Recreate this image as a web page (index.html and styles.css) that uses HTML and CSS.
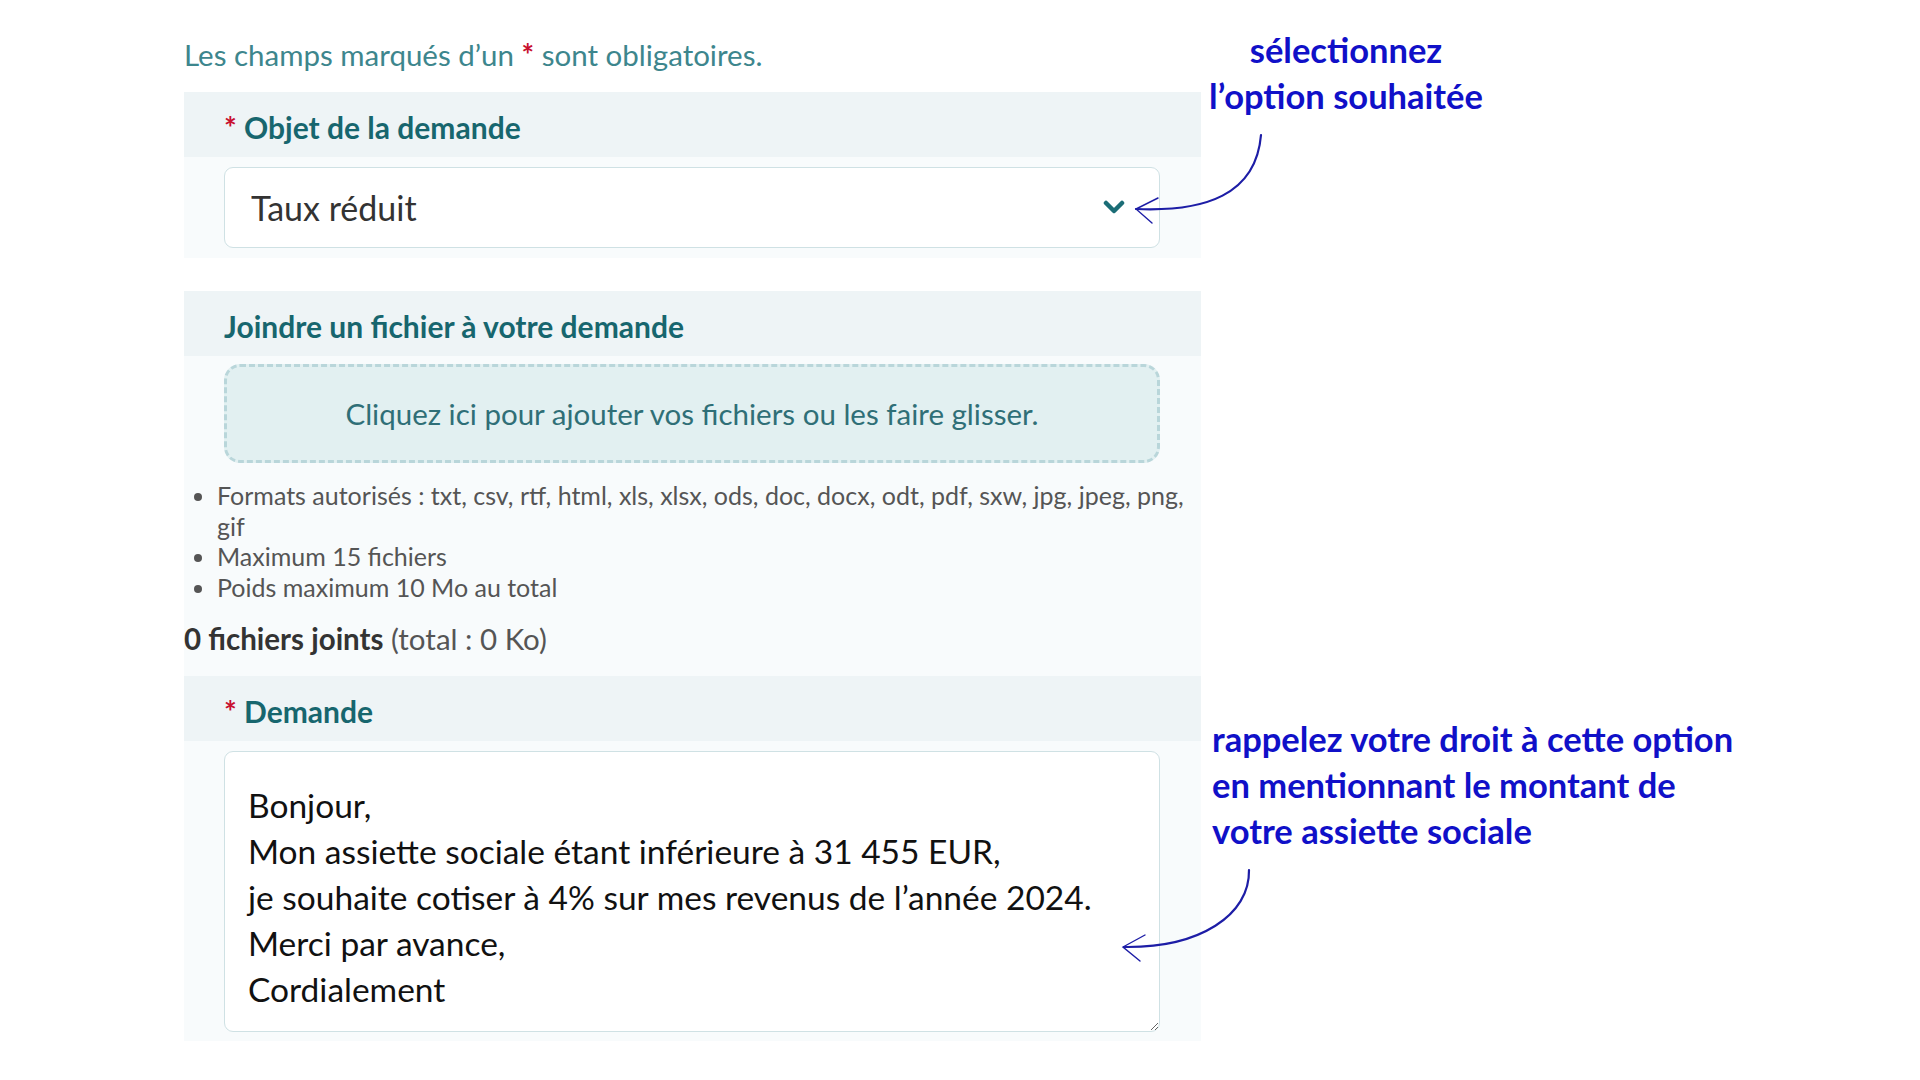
FILE: index.html
```html
<!DOCTYPE html>
<html lang="fr">
<head>
    <meta charset="UTF-8">
    <meta name="viewport" content="width=device-width, initial-scale=1.0">
    <title>Objet de la demande</title>
    <link rel="stylesheet" href="styles.css">
</head>
<body>
    <div class="page">
        <form class="demande">
            <p class="intro">Les champs marqués d’un <span class="req">*</span> sont obligatoires.</p>

            <section class="field">
                <div class="field-head">
                    <label for="objet"><span class="req">*</span> Objet de la demande</label>
                </div>
                <div class="field-body">
                    <div class="select-wrap">
                        <select id="objet" class="select">
                            <option>Taux réduit</option>
                        </select>
                        <svg class="chevron" width="22" height="15" viewBox="0 0 22 15">
                            <path d="M3 3 L11 11 L19 3" fill="none" stroke="#1b6d76" stroke-width="4.5" stroke-linecap="round" stroke-linejoin="round"/>
                        </svg>
                    </div>
                </div>
            </section>

            <section class="field field-files">
                <div class="field-head">
                    <label>Joindre un fichier à votre demande</label>
                </div>
                <div class="field-body">
                    <div class="dropzone">Cliquez ici pour ajouter vos fichiers ou les faire glisser.</div>
                </div>
                <ul class="rules">
                    <li>Formats autorisés : txt, csv, rtf, html, xls, xlsx, ods, doc, docx, odt, pdf, sxw, jpg, jpeg, png, gif</li>
                    <li>Maximum 15 fichiers</li>
                    <li>Poids maximum 10 Mo au total</li>
                </ul>
                <p class="counter"><strong>0 fichiers joints</strong> (total : 0 Ko)</p>
            </section>

            <section class="field">
                <div class="field-head">
                    <label for="texte"><span class="req">*</span> Demande</label>
                </div>
                <div class="field-body">
                    <textarea id="texte" class="message">Bonjour,
Mon assiette sociale étant inférieure à 31 455 EUR,
je souhaite cotiser à 4% sur mes revenus de l’année 2024.
Merci par avance,
Cordialement</textarea>
                </div>
            </section>
        </form>

        <!-- annotations -->
        <div class="note note-select">sélectionnez<br>l’option souhaitée</div>
        <div class="note note-demande">rappelez votre droit à cette option<br>en mentionnant le montant de<br>votre assiette sociale</div>

        <svg class="arrows" width="1920" height="1080" viewBox="0 0 1920 1080">
            <g fill="none" stroke="#1d1da6" stroke-linecap="round">
                <path d="M1261 135 C1256 195 1205 212 1136 209" stroke-width="2.2"/>
                <path d="M1158 198 L1136 209 L1152 223" stroke-width="1.4"/>
                <path d="M1249 870 C1250 915 1200 948 1124 947" stroke-width="2.2"/>
                <path d="M1145 935 L1123 947 L1140 961" stroke-width="1.4"/>
            </g>
        </svg>
    </div>
</body>
</html>
```

FILE: styles.css
```css
:root {
    --teal: #17666e;
    --teal-light: #3d868d;
    --red: #c8102e;
    --head-bg: #eef4f6;
    --body-bg: #f8fbfc;
    --border: #cfe1e4;
    --note-blue: #1010c8;
}

* {
    margin: 0;
    padding: 0;
    box-sizing: border-box;
}

body {
    font-family: Lato, "Noto Sans", sans-serif;
    background: #ffffff;
    color: #333333;
}

.page {
    position: relative;
    width: 1920px;
    height: 1080px;
    overflow: hidden;
}

.demande {
    width: 1017px;
    margin-left: 184px;
    padding-top: 37px;
}

.intro {
    font-size: 29.5px;
    line-height: 36px;
    color: var(--teal-light);
    margin-bottom: 19px;
}

.req {
    color: var(--red);
    font-weight: bold;
}

.field {
    background: var(--body-bg);
    margin-bottom: 33px;
}

.field-files {
    margin-bottom: 0;
    padding-bottom: 19px;
}

.field-head {
    background: var(--head-bg);
    height: 65px;
    padding: 17px 40px 0;
}

.field-head label {
    font-size: 30px;
    line-height: 36px;
    font-weight: bold;
    color: var(--teal);
}

.field-body {
    padding: 10px 41px 10px 40px;
}

.select-wrap {
    position: relative;
}

.select {
    appearance: none;
    width: 100%;
    height: 81px;
    padding: 0 60px 0 26px;
    font-family: Lato, "Noto Sans", sans-serif;
    font-size: 34px;
    color: #333333;
    background: #ffffff;
    border: 1px solid var(--border);
    border-radius: 9px;
}

.chevron {
    position: absolute;
    right: 35px;
    top: 33px;
}

.field-files .field-body {
    padding-top: 8px;
    padding-bottom: 0;
}

.dropzone {
    height: 99px;
    display: flex;
    align-items: center;
    justify-content: center;
    background: #e2f0f1;
    border: 3px dashed #b9d6da;
    border-radius: 16px;
    font-size: 29.5px;
    color: #2f6f77;
}

.rules {
    margin-top: 17px;
    padding-left: 33px;
    font-size: 25px;
    line-height: 30.5px;
    color: #555555;
}

.counter {
    margin-top: 19px;
    font-size: 29.5px;
    line-height: 36px;
    color: #555555;
}

.counter strong {
    color: #333333;
}

.message {
    display: block;
    width: 100%;
    height: 281px;
    padding: 29.5px 23px 10px;
    font-family: Lato, "Noto Sans", sans-serif;
    font-size: 33.5px;
    line-height: 46px;
    color: #111111;
    background: #ffffff;
    border: 1px solid var(--border);
    border-radius: 9px;
}

.field:last-child {
    padding-bottom: 9px;
}

.field:last-child .field-body {
    padding-bottom: 0;
}

/* annotations */
.note {
    position: absolute;
    font-size: 34.5px;
    line-height: 46px;
    font-weight: bold;
    color: var(--note-blue);
}

.note-select {
    left: 1170px;
    top: 27px;
    width: 352px;
    text-align: center;
}

.note-demande {
    left: 1212px;
    top: 716px;
}

.arrows {
    position: absolute;
    left: 0;
    top: 0;
    pointer-events: none;
}
```
